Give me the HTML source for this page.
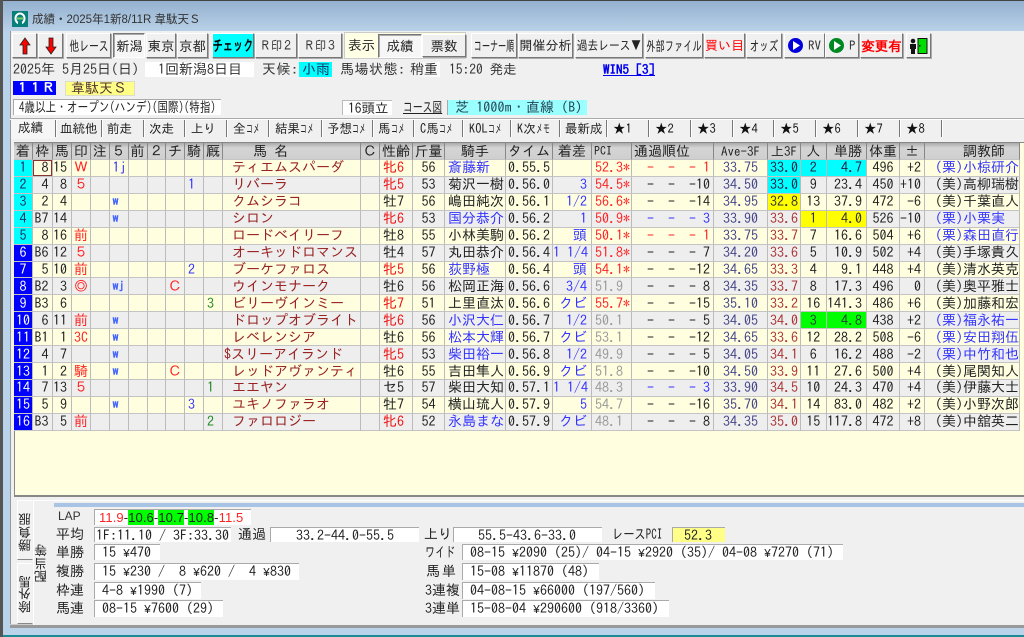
<!DOCTYPE html>
<html lang="ja"><head><meta charset="utf-8"><style>
html,body{margin:0;padding:0;background:#f0f0f0}
#w{position:relative;width:1024px;height:637px;overflow:hidden;background:#f0f0f0;font:14px "IPAGothic","Liberation Mono","Noto Sans CJK JP",monospace;color:#222;filter:blur(.3px)}
#w>*,.a{position:absolute}
.b{box-sizing:border-box;top:33px;height:25px;display:flex;align-items:center;justify-content:center;background:#f0f0f0;border:1px solid;border-color:#fff #777 #777 #fff;box-shadow:1px 1px 0 #aaa;white-space:nowrap}
.p{border-color:#777 #fff #fff #777;box-shadow:inset 1px 1px 0 #aaa;background:#f6f6f6}
.s{display:inline-block}
.l{white-space:pre;line-height:15px}
.x{box-sizing:border-box;background:#fff;white-space:pre;line-height:15px}
.y{box-sizing:border-box;background:#fff;border-top:1px solid #aaa;border-left:1px solid #aaa;white-space:pre;padding-left:7px;line-height:15px}
.t{top:121px;height:16px;line-height:16px;text-align:left;white-space:nowrap;font-size:12.500px}
.q{top:120px;width:1px;height:17px;background:#777;box-shadow:1px 0 0 #fff}
i.n{display:inline-block;font-style:normal;width:14px;transform:scaleX(.56);transform-origin:0 50%;white-space:nowrap;text-align:left}
.e{font:normal 11.670px "Liberation Mono",monospace}
table{border-collapse:separate;border-spacing:0;table-layout:fixed;width:1006px}
td,th{box-sizing:border-box;height:16.93px;padding:0 3px 0 0;border-right:1px solid #bbb;border-bottom:1px solid #c4c4c4;white-space:pre;overflow:hidden;line-height:15px;font-weight:normal;text-align:right}
th{height:17px;background:linear-gradient(#aaa,#d4d4d4 30%,#cfcfcf);text-align:center;padding:0;border-right:1px solid #888}
tr:nth-child(odd) td{background:#ffffe0}
tr:nth-child(even) td{background:#eee}
td.g{background:#0ff!important;color:#136;text-align:center;padding:0}
td.h{background:#00f!important;color:#fff;text-align:center;padding:0}
td.m{text-align:left;padding-left:9px;color:#922}
td.c{text-align:center;padding:0}
.R{color:#f22}.B{color:#33f}.G{color:#282}.E{color:#999}.D{color:#448}.M{color:#a33}
.W{color:#46f;font-size:12px;font-weight:bold}
td.u{text-align:left;padding:0 0 0 3px}
td.j{text-align:left;padding-left:3px}
td.C{background:#0ff!important;color:#224}
td.Y{background:#ff0!important;color:#333}
td.L{background:#0f0!important;color:#243}
td.f{color:#e11}
td:nth-child(3),td:nth-child(18),td:nth-child(24){padding-right:4px}
td:last-child{text-align:left!important;padding-left:10px!important;padding-right:0!important}
</style></head><body><div id="w">
<div style="left:0;top:0;width:1024px;height:1px;background:#444"></div>
<div style="left:0;top:1px;width:1024px;height:30px;background:linear-gradient(#94b1cf,#b9d1e8)"></div>
<div style="left:0;top:0;width:3px;height:637px;background:#555"></div>
<div style="left:3px;top:31px;width:7px;height:606px;background:#b9d3ea"></div>
<div style="left:10px;top:31px;width:1px;height:597px;background:#999"></div>
<div style="left:12px;top:11px;width:16px;height:16px;background:#087f78"></div>
<svg style="left:12px;top:11px" width="16" height="16"><ellipse cx="8" cy="7.500" rx="4.500" ry="5" fill="none" stroke="#fff" stroke-width="2"/><rect x="6" y="11" width="4" height="3" fill="#087f78"/><rect x="5" y="6.500" width="6" height="2" fill="#7c6"/></svg>
<div style="left:32px;top:12px;font:11.500px/16px 'Liberation Sans','Noto Sans CJK JP',sans-serif;color:#333;white-space:nowrap">成績・2025年1新8/11R 韋駄天Ｓ</div>

<div class="b" style="left:12px;width:25px"><svg width="14" height="20"><path d="M7 2L12 9H9V18H5V9H2Z" fill="#f00" stroke="#222" stroke-width=".8"/></svg></div>
<div class="b" style="left:38px;width:25px"><svg width="14" height="20"><path d="M5 2H9V11H12L7 18L2 11H5Z" fill="#f00" stroke="#222" stroke-width=".8"/></svg></div>
<div class="b" style="left:66px;width:45px;font-size:14px"><span class="s" style="transform:scaleX(.7)">他レース</span></div>
<div class="b p" style="left:113px;width:32px;font-size:13.500px"><span class="s" style="transform:scaleX(.98)">新潟</span></div>
<div class="b" style="left:146px;width:30px;font-size:13.500px">東京</div>
<div class="b" style="left:177px;width:31px;font-size:13.500px">京都</div>
<div class="b" style="left:212px;width:42px;background:#0ff;font-weight:bold;color:#000;font-size:15px"><span class="s" style="transform:scaleX(.68)">チェック</span></div>
<div class="b" style="left:255px;width:42px;font-size:13px;color:#333"><span class="s" style="transform:scaleX(.85)">Ｒ印２</span></div>
<div class="b" style="left:298px;width:44px;font-size:13px;color:#333"><span class="s" style="transform:scaleX(.85)">Ｒ印３</span></div>
<div style="left:344px;top:32px;width:122px;height:27px;background:#ffffe6;box-shadow:inset 0 0 0 1px #ccc"></div>
<div class="l" style="left:348px;top:38px;font-size:13.500px">表示</div>
<div class="b p" style="left:378px;top:34px;width:44px;height:24px;font-size:13.500px">成績</div>
<div class="b" style="left:422px;top:34px;width:44px;height:23px;font-size:13.500px">票数</div>
<div class="b" style="left:471px;width:46px;font-size:14px"><span class="s" style="transform:scaleX(.58)">コーナー順</span></div>
<div class="b" style="left:518px;width:55px;font-size:13px">開催分析</div>
<div class="b" style="left:575px;width:68px;font-size:13px"><span class="s" style="transform:scaleX(.83)">過去レース▼</span></div>
<div class="b" style="left:645px;width:58px;font-size:14px"><span class="s" style="transform:scaleX(.66)">外部ファイル</span></div>
<div class="b" style="left:704px;width:41px;font-size:13px;color:#f00">買い目</div>
<div class="b" style="left:746px;width:36px;font-size:14px"><span class="s" style="transform:scaleX(.68)">オッズ</span></div>
<div class="b" style="left:784px;width:41px;font-size:13px;justify-content:flex-start;padding-left:2px"><svg width="17" height="17"><circle cx="8.500" cy="8.500" r="7.500" fill="#00d"/><path d="M6 4L13 8.500L6 13Z" fill="#fff"/></svg><span style="margin-left:4px;color:#333">RV</span></div>
<div class="b" style="left:825px;width:34px;font-size:13px;justify-content:flex-start;padding-left:2px"><svg width="17" height="17"><circle cx="8.500" cy="8.500" r="7.500" fill="#082"/><path d="M6 4L13 8.500L6 13Z" fill="#fff"/></svg><span style="margin-left:4px;color:#333">P</span></div>
<div class="b" style="left:860px;width:43px;font-size:13.500px;color:#f00;font-weight:bold">変更有</div>
<div class="b" style="left:906px;width:25px"><svg width="20" height="18"><circle cx="4" cy="4" r="2.300" fill="#111"/><path d="M1 7H7V12H6V17H2V12H1Z" fill="#111"/><rect x="9" y="1.500" width="9" height="15" fill="#0d0" stroke="#111"/><rect x="10" y="8" width="1.500" height="1.500" fill="#111"/></svg></div>

<div class="l" style="left:13px;top:62px;color:#333">2025年 5月25日(日)</div>
<div class="x" style="left:145px;top:62px;width:109px;height:15px;padding-left:13px;color:#333">1回新潟8日目</div>
<div class="l" style="left:262px;top:62px;color:#333;letter-spacing:.5px">天候:</div>
<div class="x" style="left:299px;top:62px;width:33px;height:15px;background:#0ff;padding-left:3px;color:#136">小雨</div>
<div class="l" style="left:340px;top:62px;color:#333;letter-spacing:.5px">馬場状態:</div>
<div class="x" style="left:407px;top:62px;width:33px;height:15px;padding-left:3px;color:#333;background:linear-gradient(90deg,#eee,#fff)">稍重</div>
<div class="l" style="left:449px;top:62px;color:#333;font-size:13.500px">15:20 発走</div>
<div class="l" style="left:603px;top:62px;color:#00e;font-weight:bold;text-decoration:underline;font-size:13px">WIN5 [3]</div>

<div class="x" style="left:13px;top:81px;width:43px;height:14px;background:#00f;color:#fff;font-weight:bold;line-height:14px;padding-left:3px;font-size:13px">１１Ｒ</div>
<div class="x" style="left:65px;top:81px;width:70px;height:15px;background:#ff8;padding-left:6px;color:#533;box-shadow:inset 0 0 0 1px #ddc">韋駄天Ｓ</div>

<div class="x" style="left:13px;top:99px;width:208px;height:16px;border-top:1px solid #aaa;border-left:1px solid #aaa;font-size:14px;padding-left:5px"><span class="s" style="transform:scaleX(.76);transform-origin:0 50%">4歳以上・オープン(ハンデ)(国際)(特指)</span></div>
<div class="x" style="left:342px;top:100px;width:50px;height:15px;padding-left:5px;border-top:1px solid #bbb;border-left:1px solid #bbb;font-size:13.500px">16頭立</div>
<div class="l" style="left:403px;top:100px;font-size:14px"><span class="s" style="transform:scaleX(.7);transform-origin:0 50%;text-decoration:underline">コース図</span></div>
<div class="x" style="left:447px;top:100px;width:140px;height:15px;background:#9ff;padding-left:7px;color:#245;border-left:1px solid #aaa;letter-spacing:.1px">芝 1000m・直線 (B)</div>

<div style="left:10px;top:118px;width:1014px;height:1px;background:#aaa;box-shadow:0 1px 0 #fff"></div>
<div style="left:11px;top:119px;width:44px;height:20px;background:#f6f6f6"></div>
<div class="t" style="left:18px;top:120px">成績</div>
<div class="t" style="left:60px">血統他</div>
<div class="t" style="left:107px">前走</div>
<div class="t" style="left:149px">次走</div>
<div class="t" style="left:191px">上り</div>
<div class="t" style="left:233px">全<i class="n">コメ</i></div>
<div class="t" style="left:275px">結果<i class="n">コメ</i></div>
<div class="t" style="left:327px">予想<i class="n">コメ</i></div>
<div class="t" style="left:378px">馬<i class="n">コメ</i></div>
<div class="t" style="left:420px">C馬<i class="n">コメ</i></div>
<div class="t" style="left:469px">KOL<i class="n">コメ</i></div>
<div class="t" style="left:517px">K次<i class="n">メモ</i></div>
<div class="t" style="left:565px">最新成</div>
<div class="t" style="left:613px;color:#111">★1</div>
<div class="t" style="left:655px;color:#111">★2</div>
<div class="t" style="left:697px;color:#111">★3</div>
<div class="t" style="left:739px;color:#111">★4</div>
<div class="t" style="left:780px;color:#111">★5</div>
<div class="t" style="left:822px;color:#111">★6</div>
<div class="t" style="left:864px;color:#111">★7</div>
<div class="t" style="left:906px;color:#111">★8</div>
<div class="q" style="left:55px"></div><div class="q" style="left:101px"></div><div class="q" style="left:143px"></div><div class="q" style="left:184px"></div><div class="q" style="left:226px"></div><div class="q" style="left:268px"></div><div class="q" style="left:321px"></div><div class="q" style="left:372px"></div><div class="q" style="left:413px"></div><div class="q" style="left:462px"></div><div class="q" style="left:510px"></div><div class="q" style="left:559px"></div><div class="q" style="left:606px"></div><div class="q" style="left:648px"></div><div class="q" style="left:690px"></div><div class="q" style="left:732px"></div><div class="q" style="left:773px"></div><div class="q" style="left:815px"></div><div class="q" style="left:857px"></div><div class="q" style="left:899px"></div><div class="q" style="left:941px"></div>

<div style="left:14px;top:142px;width:1010px;height:355px;background:#ffffdf;border-top:1px solid #888;border-left:1px solid #888;border-bottom:2px solid #888;box-sizing:border-box"></div>
<table style="left:14px;top:143px"><colgroup><col style="width:19px"><col style="width:19.500px"><col style="width:19.500px"><col style="width:19px"><col style="width:18.500px"><col style="width:19px"><col style="width:19px"><col style="width:18.500px"><col style="width:19px"><col style="width:19px"><col style="width:19px"><col style="width:138px"><col style="width:19px"><col style="width:33px"><col style="width:32px"><col style="width:61px"><col style="width:47px"><col style="width:39px"><col style="width:40px"><col style="width:82px"><col style="width:54px"><col style="width:33px"><col style="width:25.500px"><col style="width:40.500px"><col style="width:33px"><col style="width:25px"><col style="width:95px"></colgroup>
<thead><tr><th>着</th><th>枠</th><th>馬</th><th>印</th><th>注</th><th>５</th><th>前</th><th>２</th><th>チ</th><th>騎</th><th>厩</th><th style="text-align:left;padding-left:30px">馬 名</th><th>Ｃ</th><th>性齢</th><th>斤量</th><th>騎手</th><th>タイム</th><th>着差</th><th style="text-align:left;padding-left:2px;font-size:12px">PCI</th><th style="text-align:left;padding-left:2px">通過順位</th><th style="font-size:13px">Ave-3F</th><th style="font-size:13px">上3F</th><th>人</th><th style="text-align:right;padding-right:4px">単勝</th><th>体重</th><th>±</th><th style="text-align:left;padding-left:38px">調教師</th></tr></thead>
<tbody>
<tr><td class="g">1</td><td style="box-shadow:inset 0 0 0 1px #833">8</td><td>15</td><td class="c R">Ｗ</td><td></td><td class="u B">1j</td><td></td><td></td><td></td><td></td><td></td><td class="m">ティエムスパーダ</td><td></td><td class="j f">牝6</td><td class="c">56</td><td class="j B">斎藤新</td><td class="c">0.55.5</td><td></td><td class="j R">52.3*</td><td class="R">-  -  - 1</td><td class="c D">33.75</td><td class="c C">33.0</td><td class="c C">2</td><td class="C">4.7</td><td class="c">496</td><td>+2</td><td class="c B">(栗)小椋研介</td></tr>
<tr><td class="g">2</td><td>4</td><td>8</td><td class="c R">５</td><td></td><td></td><td></td><td></td><td></td><td class="u B">1</td><td></td><td class="m">リバーラ</td><td></td><td class="j f">牝5</td><td class="c">53</td><td class="j">菊沢一樹</td><td class="c">0.56.0</td><td class="B">3</td><td class="j R">54.5*</td><td>-  -  -10</td><td class="c D">34.50</td><td class="c C">33.0</td><td class="c">9</td><td>23.4</td><td class="c">450</td><td>+10</td><td class="c">(美)高柳瑞樹</td></tr>
<tr><td class="g">3</td><td>2</td><td>4</td><td></td><td></td><td class="u W">w</td><td></td><td></td><td></td><td></td><td></td><td class="m">クムシラコ</td><td></td><td class="j">牡7</td><td class="c">56</td><td class="j">嶋田純次</td><td class="c">0.56.1</td><td class="B">1/2</td><td class="j R">56.6*</td><td>-  -  -14</td><td class="c D">34.95</td><td class="c Y">32.8</td><td class="c">13</td><td>37.9</td><td class="c">472</td><td>-6</td><td class="c">(美)千葉直人</td></tr>
<tr><td class="g">4</td><td>B7</td><td>14</td><td></td><td></td><td class="u W">w</td><td></td><td></td><td></td><td></td><td></td><td class="m">シロン</td><td></td><td class="j f">牝6</td><td class="c">53</td><td class="j B">国分恭介</td><td class="c">0.56.2</td><td class="B">1</td><td class="j R">50.9*</td><td class="B">-  -  - 3</td><td class="c D">33.90</td><td class="c M">33.6</td><td class="c Y">1</td><td class="Y">4.0</td><td class="c">526</td><td>-10</td><td class="j B">(栗)小栗実</td></tr>
<tr><td class="g">5</td><td>8</td><td>16</td><td class="c R">前</td><td></td><td></td><td></td><td></td><td></td><td></td><td></td><td class="m">ロードベイリーフ</td><td></td><td class="j">牡8</td><td class="c">55</td><td class="j">小林美駒</td><td class="c">0.56.2</td><td class="B">頭</td><td class="j R">50.1*</td><td class="R">-  -  - 1</td><td class="c D">33.75</td><td class="c M">33.7</td><td class="c">7</td><td>16.6</td><td class="c">504</td><td>+6</td><td class="c B">(栗)森田直行</td></tr>
<tr><td class="h">6</td><td>B6</td><td>12</td><td class="c R">５</td><td></td><td></td><td></td><td></td><td></td><td></td><td></td><td class="m">オーキッドロマンス</td><td></td><td class="j">牡4</td><td class="c">57</td><td class="j">丸田恭介</td><td class="c">0.56.4</td><td class="B">1 1/4</td><td class="j R">51.8*</td><td>-  -  - 7</td><td class="c D">34.20</td><td class="c M">33.6</td><td class="c">5</td><td>10.9</td><td class="c">502</td><td>+4</td><td class="c">(美)手塚貴久</td></tr>
<tr><td class="h">7</td><td>5</td><td>10</td><td class="c R">前</td><td></td><td></td><td></td><td></td><td></td><td class="u B">2</td><td></td><td class="m">ブーケファロス</td><td></td><td class="j f">牝5</td><td class="c">56</td><td class="j B">荻野極</td><td class="c">0.56.4</td><td class="B">頭</td><td class="j R">54.1*</td><td>-  -  -12</td><td class="c D">34.65</td><td class="c M">33.3</td><td class="c">4</td><td>9.1</td><td class="c">448</td><td>+4</td><td class="c">(美)清水英克</td></tr>
<tr><td class="h">8</td><td>B2</td><td>3</td><td class="c R">◎</td><td></td><td class="u W">wj</td><td></td><td></td><td class="c R">Ｃ</td><td></td><td></td><td class="m">ウインモナーク</td><td></td><td class="j">牡6</td><td class="c">56</td><td class="j">松岡正海</td><td class="c">0.56.6</td><td class="B">3/4</td><td class="j E">51.9</td><td>-  -  - 8</td><td class="c D">34.35</td><td class="c M">33.7</td><td class="c">8</td><td>17.3</td><td class="c">496</td><td>0</td><td class="c">(美)奥平雅士</td></tr>
<tr><td class="h">9</td><td>B3</td><td>6</td><td></td><td></td><td></td><td></td><td></td><td></td><td></td><td class="u G">3</td><td class="m">ビリーヴインミー</td><td></td><td class="j f">牝7</td><td class="c">51</td><td class="j">上里直汰</td><td class="c">0.56.6</td><td class="B">クビ</td><td class="j R">55.7*</td><td>-  -  -15</td><td class="c D">35.10</td><td class="c M">33.2</td><td class="c">16</td><td>141.3</td><td class="c">486</td><td>+6</td><td class="c">(美)加藤和宏</td></tr>
<tr><td class="h">10</td><td>6</td><td>11</td><td class="c R">前</td><td></td><td class="u W">w</td><td></td><td></td><td></td><td></td><td></td><td class="m">ドロップオブライト</td><td></td><td class="j f">牝6</td><td class="c">56</td><td class="j B">小沢大仁</td><td class="c">0.56.7</td><td class="B">1/2</td><td class="j E">50.1</td><td>-  -  - 5</td><td class="c D">34.05</td><td class="c M">34.0</td><td class="c L">3</td><td class="L">4.8</td><td class="c">438</td><td>+2</td><td class="c B">(栗)福永祐一</td></tr>
<tr><td class="h">11</td><td>B1</td><td>1</td><td class="c R">3C</td><td></td><td class="u W">w</td><td></td><td></td><td></td><td></td><td></td><td class="m">レベレンシア</td><td></td><td class="j">牡6</td><td class="c">56</td><td class="j B">松本大輝</td><td class="c">0.56.7</td><td class="B">クビ</td><td class="j E">53.1</td><td>-  -  -12</td><td class="c D">34.65</td><td class="c M">33.6</td><td class="c">12</td><td>28.2</td><td class="c">508</td><td>-6</td><td class="c B">(栗)安田翔伍</td></tr>
<tr><td class="h">12</td><td>4</td><td>7</td><td></td><td></td><td class="u W">w</td><td></td><td></td><td></td><td></td><td></td><td class="m" style="padding-left:1px">$スリーアイランド</td><td></td><td class="j f">牝5</td><td class="c">53</td><td class="j B">柴田裕一</td><td class="c">0.56.8</td><td class="B">1/2</td><td class="j E">49.9</td><td>-  -  - 5</td><td class="c D">34.05</td><td class="c M">34.1</td><td class="c">6</td><td>16.2</td><td class="c">488</td><td>-2</td><td class="c B">(栗)中竹和也</td></tr>
<tr><td class="h">13</td><td>1</td><td>2</td><td class="c R">騎</td><td></td><td class="u W">w</td><td></td><td></td><td class="c R">Ｃ</td><td></td><td></td><td class="m">レッドアヴァンティ</td><td></td><td class="j">牡6</td><td class="c">55</td><td class="j">吉田隼人</td><td class="c">0.56.9</td><td class="B">クビ</td><td class="j E">51.8</td><td>-  -  -10</td><td class="c D">34.50</td><td class="c M">33.9</td><td class="c">11</td><td>27.6</td><td class="c">500</td><td>+4</td><td class="c">(美)尾関知人</td></tr>
<tr><td class="h">14</td><td>7</td><td>13</td><td class="c R">５</td><td></td><td></td><td></td><td></td><td></td><td></td><td class="u G">1</td><td class="m">エエヤン</td><td></td><td class="j">セ5</td><td class="c">57</td><td class="j">柴田大知</td><td class="c">0.57.1</td><td class="B">1 1/4</td><td class="j E">48.3</td><td class="B">-  -  - 3</td><td class="c D">33.90</td><td class="c M">34.5</td><td class="c">10</td><td>24.3</td><td class="c">470</td><td>+4</td><td class="c">(美)伊藤大士</td></tr>
<tr><td class="h">15</td><td>5</td><td>9</td><td></td><td></td><td class="u W">w</td><td></td><td></td><td></td><td class="u B">3</td><td></td><td class="m">ユキノファラオ</td><td></td><td class="j">牡7</td><td class="c">54</td><td class="j">横山琉人</td><td class="c">0.57.9</td><td class="B">5</td><td class="j E">54.7</td><td>-  -  -16</td><td class="c D">35.70</td><td class="c M">34.1</td><td class="c">14</td><td>83.0</td><td class="c">482</td><td>+2</td><td class="c">(美)小野次郎</td></tr>
<tr><td class="h">16</td><td>B3</td><td>5</td><td class="c R">前</td><td></td><td></td><td></td><td></td><td></td><td></td><td class="u G">2</td><td class="m">ファロロジー</td><td></td><td class="j f">牝6</td><td class="c">52</td><td class="j B">永島まな</td><td class="c">0.57.9</td><td class="B">クビ</td><td class="j E">48.1</td><td>-  -  - 8</td><td class="c D">34.35</td><td class="c M">35.0</td><td class="c">15</td><td>117.8</td><td class="c">472</td><td>+8</td><td class="c">(美)中舘英二</td></tr>
</tbody></table>

<div style="left:10px;top:625px;width:1014px;height:3px;background:#999;box-shadow:0 -1px 0 #ccc"></div>
<div style="left:3px;top:628px;width:1021px;height:7px;background:#b9d3ea"></div>
<div style="left:3px;top:635px;width:1021px;height:2px;background:#1d8b94"></div>
<div style="left:33px;top:500px;width:991px;height:124px;border-top:1px solid #fff;border-left:1px solid #fff;background:#f0f0f0"></div>
<div style="left:54px;top:503px;width:970px;height:4px;background:#a8c4e4"></div>
<div style="left:17px;top:500px;width:16px;height:60px;border:1px solid;border-color:#fff #f0f0f0 #888 #fff;background:#f2f2f2;box-sizing:border-box"></div>
<div style="left:17px;top:563px;width:16px;height:61px;border:1px solid;border-color:#fff #f0f0f0 #888 #fff;background:#f2f2f2;box-sizing:border-box"></div>
<div style="left:18px;top:513px;width:14px;writing-mode:vertical-rl;transform:rotate(180deg);font-size:13px;line-height:14px">勝負服</div>
<div style="left:18px;top:575px;width:14px;writing-mode:vertical-rl;transform:rotate(180deg);font-size:13px;line-height:14px">除外馬</div>
<div style="left:34px;top:544px;width:14px;writing-mode:vertical-rl;transform:rotate(180deg);font-size:13px;line-height:14px">配当等</div>

<div class="l" style="left:58px;top:509px;font-family:'Liberation Sans',sans-serif;font-size:12px;color:#333">LAP</div>
<div class="y" style="left:94px;top:509px;width:157px;height:16px;padding-left:4px;font-family:'Liberation Sans',sans-serif;font-size:13px;letter-spacing:.1px"><span class="R">11.9</span>-<span style="background:#0f0">10.6</span>-<span style="background:#0f0">10.7</span>-<span style="background:#0f0">10.8</span>-<span class="R">11.5</span></div>
<div class="l" style="left:56px;top:527px">平均</div>
<div class="y" style="left:94px;top:527px;width:137px;height:15px;padding-left:1px">1F:11.10 / 3F:33.30</div>
<div class="l" style="left:238px;top:527px">通過</div>
<div class="y" style="left:270px;top:527px;width:149px;height:15px;padding-left:25px">33.2-44.0-55.5</div>
<div class="l" style="left:424px;top:527px">上り</div>
<div class="y" style="left:453px;top:527px;width:149px;height:15px;padding-left:24px">55.5-43.6-33.0</div>
<div class="l" style="left:612px;top:527px;font-size:14px"><span class="s" style="transform:scaleX(.8);transform-origin:0 50%">レースPCI</span></div>
<div class="y" style="left:672px;top:527px;width:53px;height:15px;background:#ff8;padding-left:11px">52.3</div>
<div class="l" style="left:56px;top:545px">単勝</div>
<div class="y" style="left:94px;top:544px;width:66px;height:16px">15 <b class="e">¥</b>470</div>
<div class="l" style="left:56px;top:564px">複勝</div>
<div class="y" style="left:94px;top:563px;width:205px;height:17px">15 <b class="e">¥</b>230 /  8 <b class="e">¥</b>620 /  4 <b class="e">¥</b>830</div>
<div class="l" style="left:56px;top:583px">枠連</div>
<div class="y" style="left:94px;top:582px;width:107px;height:17px">4-8 <b class="e">¥</b>1990 (7)</div>
<div class="l" style="left:56px;top:601px">馬連</div>
<div class="y" style="left:94px;top:600px;width:129px;height:17px">08-15 <b class="e">¥</b>7600 (29)</div>
<div class="l" style="left:425px;top:545px;font-size:14px"><span class="s" style="transform:scaleX(.72);transform-origin:0 50%">ワイド</span></div>
<div class="y" style="left:462px;top:544px;width:381px;height:16px">08-15 <b class="e">¥</b>2090 (25)/ 04-15 <b class="e">¥</b>2920 (35)/ 04-08 <b class="e">¥</b>7270 (71)</div>
<div class="l" style="left:426px;top:564px;letter-spacing:2px">馬単</div>
<div class="y" style="left:462px;top:563px;width:137px;height:17px">15-08 <b class="e">¥</b>11870 (48)</div>
<div class="l" style="left:425px;top:583px;font-size:14px">3連複</div>
<div class="y" style="left:462px;top:582px;width:193px;height:17px">04-08-15 <b class="e">¥</b>66000 (197/560)</div>
<div class="l" style="left:425px;top:601px;font-size:14px">3連単</div>
<div class="y" style="left:462px;top:600px;width:207px;height:17px">15-08-04 <b class="e">¥</b>290600 (918/3360)</div>
</div></body></html>
